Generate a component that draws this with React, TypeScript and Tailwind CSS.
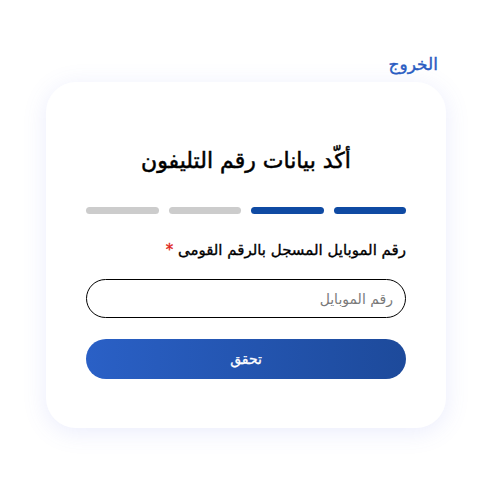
import { useState } from 'react'

export default function App() {
  const [phone, setPhone] = useState('')
  const steps = [true, true, false, false]

  return (
    <div dir="rtl" className="min-h-screen w-full bg-white pt-[53px]" style={{ fontFamily: '"DejaVu Sans", "Noto Sans", sans-serif' }}>
      <div className="mr-[54px] w-[400px]">
        <div className="flex pr-[8px]">
          <a href="#" className="text-[17px] leading-[23px] text-[#2a5cc2] [-webkit-text-stroke:0.4px_#2a5cc2]">الخروج</a>
        </div>
        <div className="mt-[6px] rounded-[30px] bg-white px-[40px] pt-[64px] pb-[49px] shadow-[0_4px_24px_rgba(90,110,230,0.13)]">
          <h1 className="text-center text-[22px] font-normal leading-[30px] text-black [-webkit-text-stroke:0.5px_black]">أكّد بيانات رقم التليفون</h1>
          <div className="mt-[31px] flex gap-[10px]">
            {steps.map((on, i) => (
              <div key={i} className={on ? 'h-[7px] flex-1 rounded-full bg-[#0f4aa3]' : 'h-[7px] flex-1 rounded-full bg-[#cccccc]'} />
            ))}
          </div>
          <label className="mt-[26px] block text-[15px] leading-[20px] text-black [-webkit-text-stroke:0.35px_black]">
            رقم الموبايل المسجل بالرقم القومى <span className="text-[#e0261b] [-webkit-text-stroke:0.35px_#e0261b]">*</span>
          </label>
          <input
            value={phone}
            onChange={(e) => setPhone(e.target.value)}
            placeholder="رقم الموبايل"
            className="mt-[19px] block h-[39px] w-full rounded-full border border-black px-[12px] text-[14px] outline-none placeholder:text-[#7a7a7a]"
          />
          <button className="mt-[21px] h-[40px] w-full rounded-full bg-gradient-to-l from-[#1d4a9b] to-[#2a60c6] text-[14px] text-white [-webkit-text-stroke:0.3px_white]">
            تحقق
          </button>
        </div>
      </div>
    </div>
  )
}
